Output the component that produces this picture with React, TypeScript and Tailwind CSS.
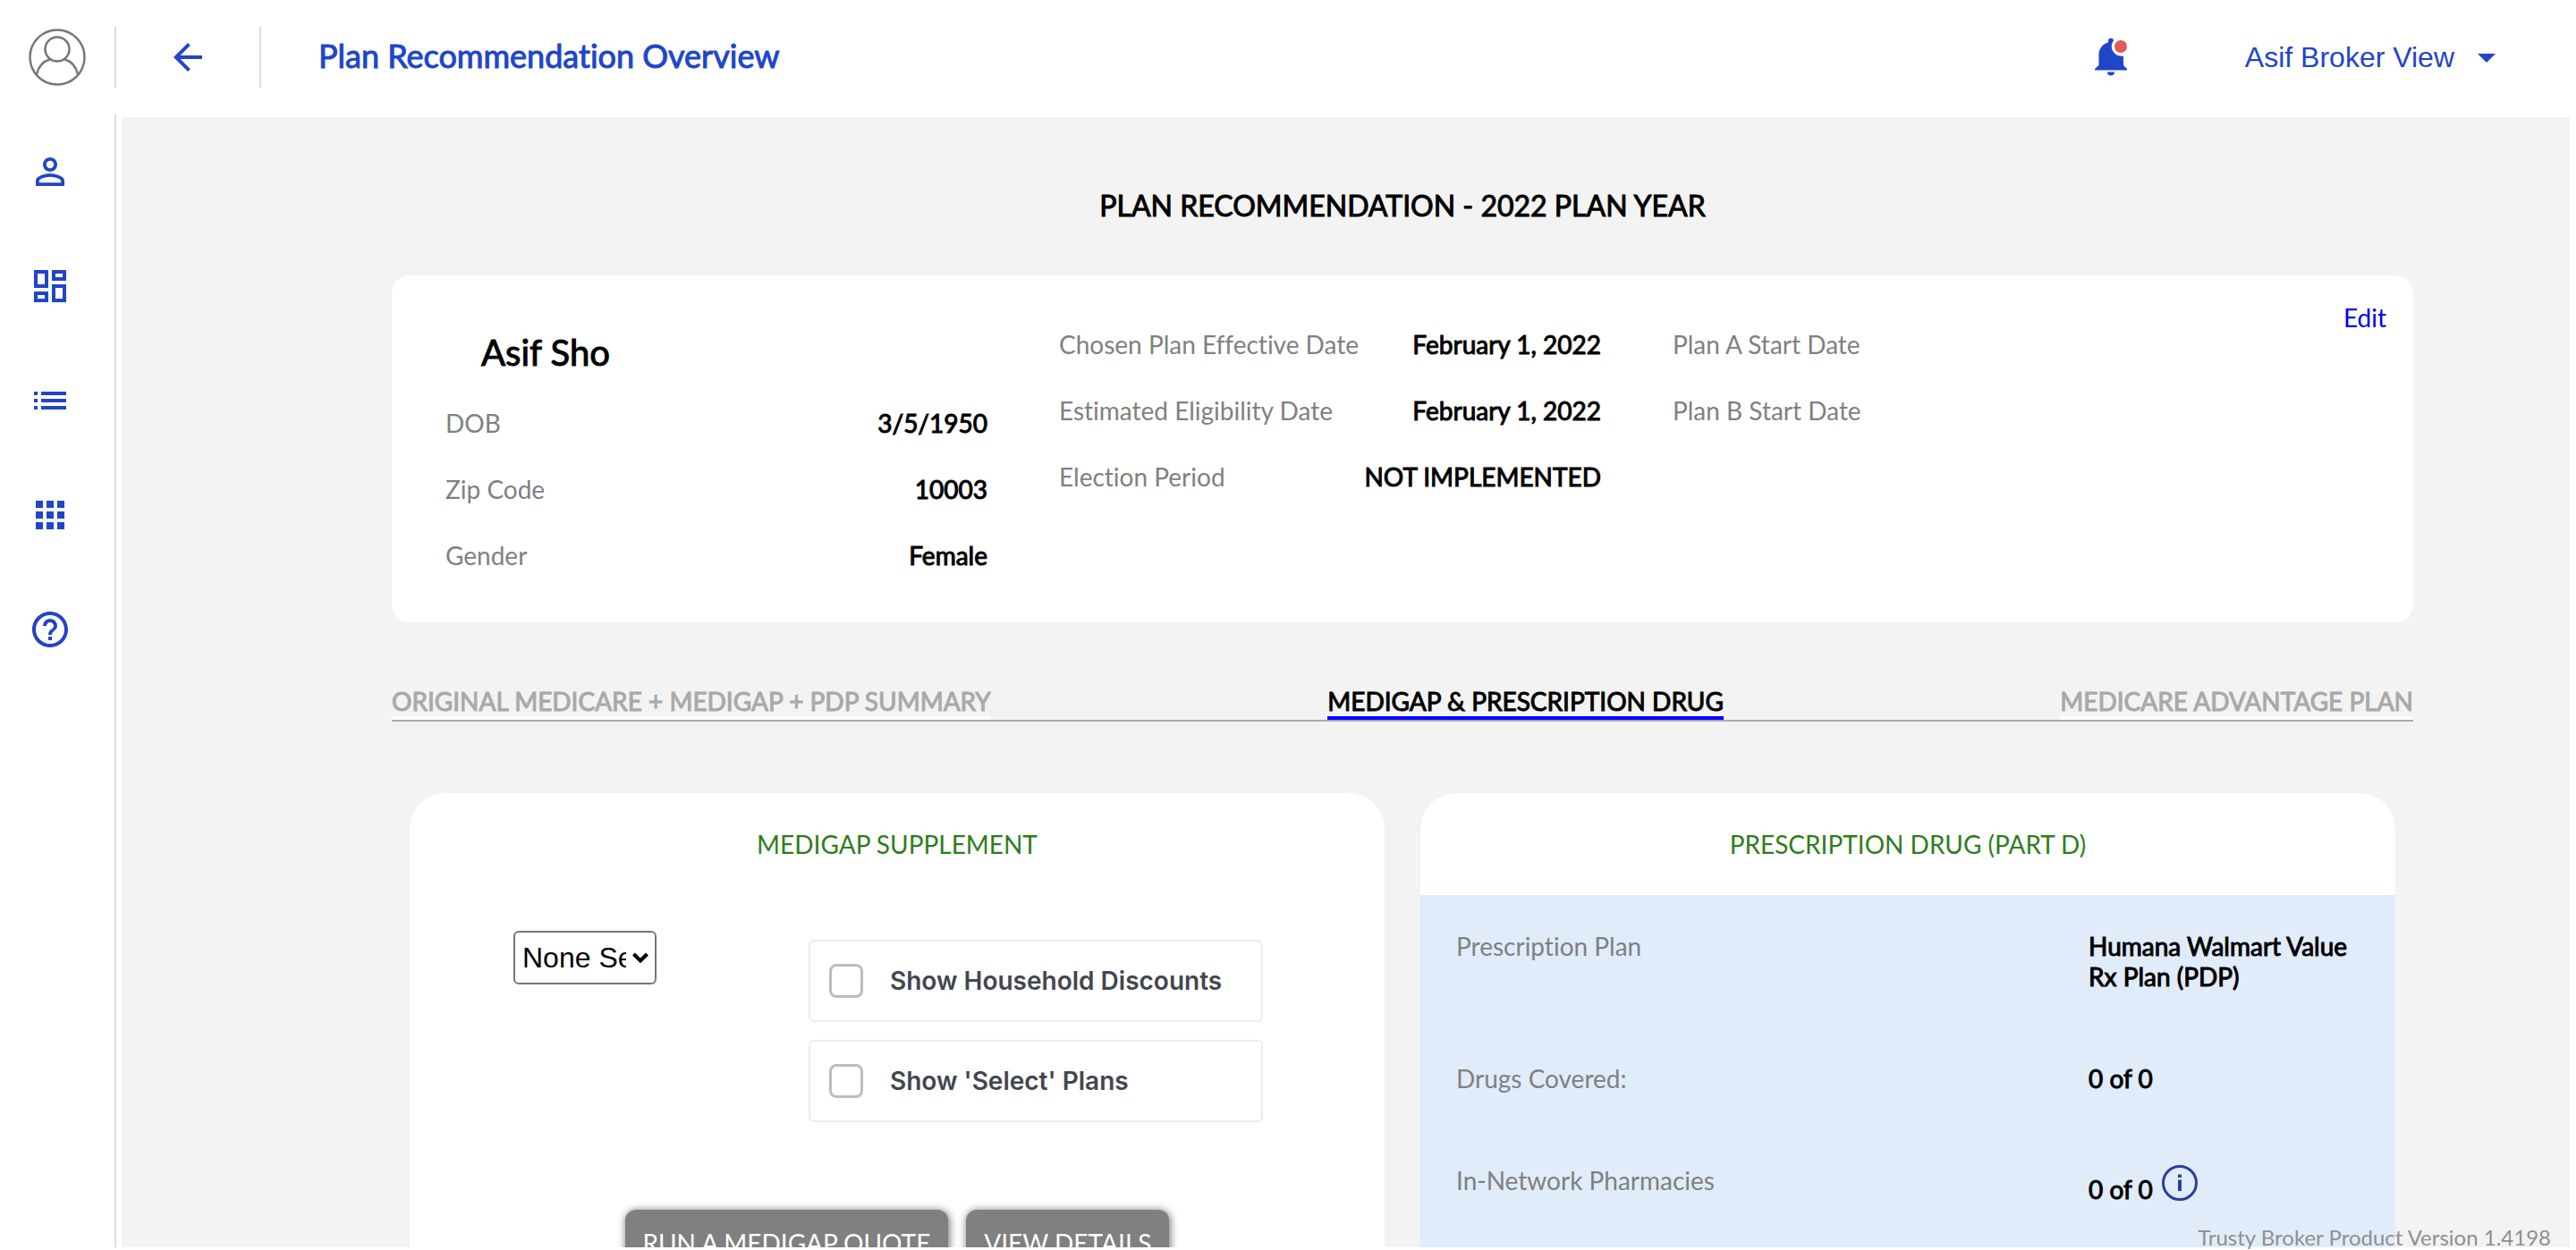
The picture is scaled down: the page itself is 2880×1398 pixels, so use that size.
import { useState } from 'react';
import type { ReactNode } from 'react';
import {
  MdApps,
  MdArrowBack,
  MdArrowDropDown,
  MdHelpOutline,
  MdList,
  MdOutlineDashboard,
  MdPersonOutline,
} from 'react-icons/md';

const heavy = '[-webkit-text-stroke:1px_currentColor]';

function Avatar() {
  return (
    <svg viewBox="0 0 64 64" className="size-16 text-[#777]" fill="none" stroke="currentColor" strokeWidth="2.5">
      <circle cx="32" cy="32" r="30.5" />
      <circle cx="32" cy="23" r="13.5" />
      <path d="M9 51C11 42 16.500 36.500 24 34.200M55 51C53 42 47.500 36.500 40 34.200" />
    </svg>
  );
}

function BellIcon() {
  return (
    <svg viewBox="0 0 36 44" className="h-11 w-9">
      <path
        fill="#2145c9"
        d="M18 42.500a4 4 0 0 0 4-4h-8a4 4 0 0 0 4 4zM32 31V20.500A11 11 0 0 1 19 7.500 11 11 0 0 1 21 3.500 3 3 0 0 0 15 4v1.400C8.500 7 4.500 12.500 4.500 19.500V31L0 35v1.500h36V35z"
      />
      <circle cx="29" cy="10" r="7" fill="#e05a57" />
    </svg>
  );
}

function InfoIcon() {
  return (
    <svg viewBox="0 0 40 40" className="size-10" fill="none" stroke="#2b3f9b" strokeWidth="3">
      <circle cx="20" cy="20" r="18.500" />
      <path d="M20 16.500V29M20 10.500V14" strokeWidth="4" />
    </svg>
  );
}

function Detail({ label, value }: { label: string; value?: string }) {
  return (
    <div className="flex items-center justify-between whitespace-nowrap">
      <dt className="text-[#808080]">{label}</dt>
      <dd className={heavy}>{value}</dd>
    </div>
  );
}

function DrugRow({ label, children }: { label: string; children: ReactNode }) {
  return (
    <div className="flex justify-between p-10">
      <dt className="text-[#808080]">{label}</dt>
      <dd className={`w-[30%] ${heavy}`}>{children}</dd>
    </div>
  );
}

function CheckOption({ label }: { label: string }) {
  return (
    <label className="flex h-[92px] items-center gap-[30px] rounded-md border-2 border-[#ececec] px-[21px] font-['Inter',sans-serif] text-[28px] font-semibold text-[#43464f]">
      <input
        type="checkbox"
        className="size-[38px] appearance-none rounded-lg border-[3px] border-[#bdbdbd] bg-white checked:bg-[#2145c9]"
      />
      {label}
    </label>
  );
}

const navItems = [
  { label: 'Profile', Icon: MdPersonOutline },
  { label: 'Dashboard', Icon: MdOutlineDashboard },
  { label: 'List', Icon: MdList },
  { label: 'Apps', Icon: MdApps },
  { label: 'Help', Icon: MdHelpOutline },
];

const tabs = ['ORIGINAL MEDICARE + MEDIGAP + PDP SUMMARY', 'MEDIGAP & PRESCRIPTION DRUG', 'MEDICARE ADVANTAGE PLAN'];

export default function App() {
  const [active, setActive] = useState(1);
  return (
    <div className="relative flex h-screen flex-col overflow-hidden bg-white pb-[3px] font-['Lato',sans-serif] text-[28px] leading-[34px] text-black [font-variant-ligatures:none]">
      <header className="flex h-32 shrink-0 items-center text-[#2145c9]">
        <div className="flex h-[68px] w-[130px] shrink-0 items-center border-r-2 border-[#dcdcdc] pl-8">
          <Avatar />
        </div>
        <div className="flex h-[68px] w-[162px] shrink-0 items-center justify-center border-r-2 border-[#dcdcdc]">
          <button type="button" aria-label="Back">
            <MdArrowBack className="size-12" />
          </button>
        </div>
        <h1 className={`ml-16 pb-1 text-[36px] ${heavy}`}>Plan Recommendation Overview</h1>
        <button type="button" aria-label="Notifications" className="ml-auto">
          <BellIcon />
        </button>
        <button
          type="button"
          className="mr-[76px] ml-[132px] flex items-center gap-3 font-['Liberation_Sans',sans-serif] text-[32px]"
        >
          Asif Broker View
          <MdArrowDropDown className="size-12" />
        </button>
      </header>

      <div className="flex min-h-0 flex-1">
        <nav className="flex w-[130px] shrink-0 flex-col gap-20 border-r-2 border-[#dcdcdc] pt-10 pl-8 text-[#2145c9]">
          {navItems.map(({ label, Icon }) => (
            <a key={label} href="#" aria-label={label}>
              <Icon className="size-12" />
            </a>
          ))}
        </nav>

        <main className="mt-[3px] mr-[7px] ml-1.5 flex-1 overflow-hidden bg-[#f3f3f3] pt-20 pr-[175px] pl-[302px]">
          <h2 className={`text-center text-[32px] leading-[38px] ${heavy}`}>PLAN RECOMMENDATION - 2022 PLAN YEAR</h2>

          <section className="mt-[59px] flex rounded-[20px] bg-white pt-[30px] pr-[30px] pb-[58px] pl-5">
            <div className="grid flex-1 grid-cols-3">
              <div className="px-10">
                <h3 className={`mt-8 pl-10 text-[40px] leading-[48px] ${heavy}`}>Asif Sho</h3>
                <dl className="mt-[38px] flex flex-col gap-10">
                  <Detail label="DOB" value="3/5/1950" />
                  <Detail label="Zip Code" value="10003" />
                  <Detail label="Gender" value="Female" />
                </dl>
              </div>
              <dl className="flex flex-col gap-10 px-10 pt-[30px]">
                <Detail label="Chosen Plan Effective Date" value="February 1, 2022" />
                <Detail label="Estimated Eligibility Date" value="February 1, 2022" />
                <Detail label="Election Period" value="NOT IMPLEMENTED" />
              </dl>
              <dl className="flex flex-col gap-10 px-10 pt-[30px]">
                <Detail label="Plan A Start Date" />
                <Detail label="Plan B Start Date" />
              </dl>
            </div>
            <div className="w-[152px] text-right">
              <a href="#" className="text-[#0000ee]">
                Edit
              </a>
            </div>
          </section>

          <div role="tablist" className="mt-[71px] flex justify-between border-b-2 border-[#a9a9a9]">
            {tabs.map((tab, i) => (
              <button
                key={tab}
                type="button"
                role="tab"
                aria-selected={i === active}
                onClick={() => setActive(i)}
                className={
                  i === active
                    ? `border-b-4 border-[#0000ff] text-black ${heavy}`
                    : `border-b-4 border-white text-[#a9a9a9] ${heavy}`
                }
              >
                {tab}
              </button>
            ))}
          </div>

          <div className="mt-20 grid grid-cols-2 gap-10 px-5">
            <section className="overflow-hidden rounded-t-[40px] bg-white pb-40">
              <h3 className="pt-10 text-center text-[#2e7d1a]">MEDIGAP SUPPLEMENT</h3>
              <div className="mt-20 flex items-start justify-between pr-[136px] pl-[116px]">
                <div className="relative w-40">
                  <select
                    aria-label="Medigap plan"
                    className="h-[60px] w-full appearance-none rounded-md border-2 border-[#767676] bg-white pr-8 pl-2 font-['Liberation_Sans',sans-serif] text-[32px]"
                  >
                    <option>None Selected</option>
                  </select>
                  <svg
                    viewBox="0 0 18 12"
                    className="pointer-events-none absolute top-6 right-[9px] h-3 w-[18px]"
                    fill="none"
                    stroke="black"
                    strokeWidth="4"
                  >
                    <path d="M1.500 2L9 9.500 16.500 2" />
                  </svg>
                </div>
                <div className="mt-2.5 flex w-[508px] flex-col gap-5">
                  <CheckOption label="Show Household Discounts" />
                  <CheckOption label="Show 'Select' Plans" />
                </div>
              </div>
              <div className="mt-[98px] flex justify-center gap-5 text-white">
                <button type="button" className="rounded-xl bg-[#808080] px-5 py-5 shadow-[1px_1px_8px_1px_rgba(0,0,0,0.5)]">
                  RUN A MEDIGAP QUOTE
                </button>
                <button type="button" className="rounded-xl bg-[#808080] px-5 py-5 shadow-[1px_1px_8px_1px_rgba(0,0,0,0.5)]">
                  VIEW DETAILS
                </button>
              </div>
            </section>

            <section className="flex flex-col overflow-hidden rounded-t-[40px] bg-white">
              <h3 className="py-10 text-center text-[#2e7d1a]">PRESCRIPTION DRUG (PART D)</h3>
              <dl className="flex-1 bg-[#e1ecfa]">
                <DrugRow label="Prescription Plan">Humana Walmart Value Rx Plan (PDP)</DrugRow>
                <DrugRow label="Drugs Covered:">0 of 0</DrugRow>
                <DrugRow label="In-Network Pharmacies">
                  <span className="flex items-start gap-2.5">
                    <span className="pt-2.5">0 of 0</span>
                    <InfoIcon />
                  </span>
                </DrugRow>
              </dl>
            </section>
          </div>
        </main>
      </div>

      <footer className="absolute right-7 bottom-0 text-2xl leading-7 text-[#909090]">
        Trusty Broker Product Version 1.4198
      </footer>
    </div>
  );
}
